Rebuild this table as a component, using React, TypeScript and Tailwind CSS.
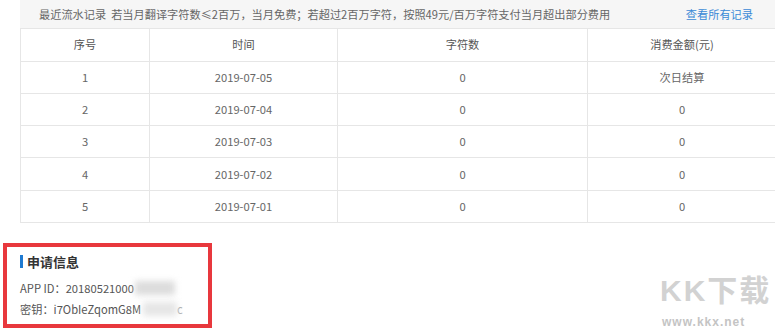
const rows = [
  { id: 1, date: '2019-07-05', chars: '0', cost: '次日结算' },
  { id: 2, date: '2019-07-04', chars: '0', cost: '0' },
  { id: 3, date: '2019-07-03', chars: '0', cost: '0' },
  { id: 4, date: '2019-07-02', chars: '0', cost: '0' },
  { id: 5, date: '2019-07-01', chars: '0', cost: '0' },
];

const cols = ['w-[129px]', 'w-[188px]', 'w-[250px]', 'w-[189px]'];

export default function App() {
  return (
    <div className="relative w-[775px] h-[332px] overflow-hidden bg-white text-[11.2px] text-[#666] font-['Noto_Sans_CJK_SC',sans-serif]">
      {/* 流水记录 */}
      <div className="ml-[20px] w-[756px]">
        <div className="flex items-center justify-between h-[29px] bg-[#f6f6f6] border-b border-[#e6e6e6] pl-[19px] pr-[23px]">
          <span>
            最近流水记录&nbsp;&nbsp;若当月翻译字符数≤2百万，当月免费；若超过2百万字符，按照49元/百万字符支付当月超出部分费用
          </span>
          <span className="text-[#3a8ad6] cursor-pointer">查看所有记录</span>
        </div>
        <table className="border-collapse table-fixed w-full">
          <thead>
            <tr className="h-[32px]">
              {['序号', '时间', '字符数', '消费金额(元)'].map((h, i) => (
                <th
                  key={h}
                  className={`${cols[i]} font-normal text-[#555] text-center border border-t-0 border-[#e6e6e6]`}
                >
                  {h}
                </th>
              ))}
            </tr>
          </thead>
          <tbody>
            {rows.map((r) => (
              <tr key={r.id} className="h-[32.3px]">
                <td className="text-center border border-[#e6e6e6]">{r.id}</td>
                <td className="text-center border border-[#e6e6e6]">{r.date}</td>
                <td className="text-center border border-[#e6e6e6]">{r.chars}</td>
                <td className="text-center border border-[#e6e6e6]">{r.cost}</td>
              </tr>
            ))}
          </tbody>
        </table>
      </div>

      {/* 申请信息 */}
      <div className="ml-[3px] mt-[20px] w-[209px] h-[85px] border-[4px] border-[#e8383d] pl-[13px] pt-[5px]">
        <div className="flex items-center gap-[4px] h-[19px]">
          <span className="w-[3px] h-[13px] bg-[#1f7ad1]" />
          <span className="text-[13px] font-bold text-[#333]">申请信息</span>
        </div>
        <div className="mt-[7px] leading-[21px] text-[#555]">
          <div className="flex items-center">
            APP ID：20180521000
            <span className="ml-[1px] w-[40px] h-[14px] bg-[#dcdcdc] blur-[3px]" />
          </div>
          <div className="flex items-center">
            密钥：i7ObIeZqomG8M
            <span className="ml-[2px] w-[34px] h-[14px] bg-[#e6e6e6] blur-[3px]" />
            <span className="text-[#aaa]">c</span>
          </div>
        </div>
      </div>

      {/* watermark */}
      <div className="absolute left-[660px] top-[276px] text-[#d2d2d2] leading-none select-none">
        <div className="text-[30px] font-bold tracking-[2px] font-['Liberation_Sans','Noto_Sans_CJK_SC',sans-serif]">KK下载</div>
        <div className="text-[12px] font-bold text-[#c4c4c4] mt-[10px] ml-[2px] tracking-[1px] font-['Liberation_Sans',sans-serif]">www.kkx.net</div>
      </div>
    </div>
  );
}
